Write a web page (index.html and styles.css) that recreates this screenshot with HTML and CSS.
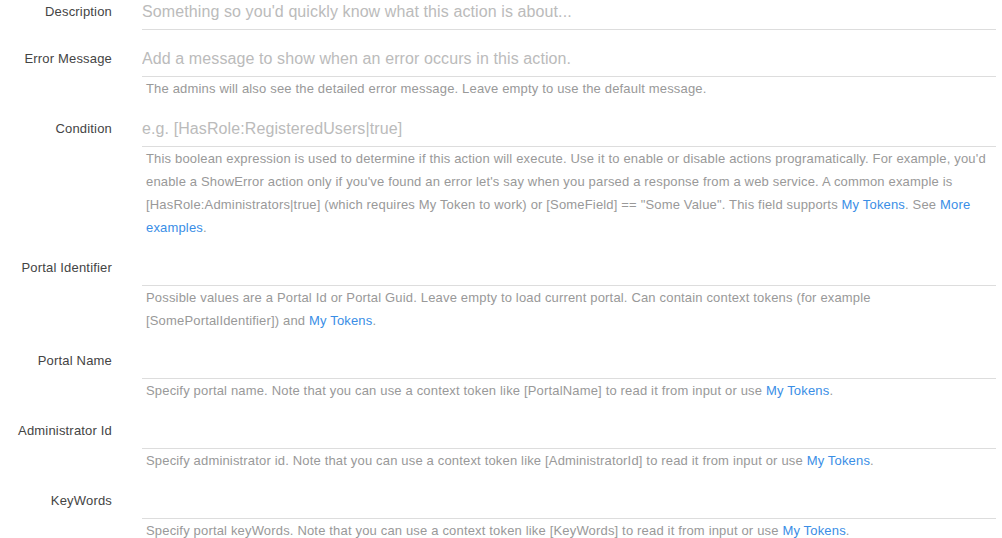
FILE: index.html
```html
<!DOCTYPE html>
<html>
<head>
<meta charset="utf-8">
<link rel="stylesheet" href="styles.css">
</head>
<body>
<div class="form">
  <div class="row">
    <label class="lbl">Description</label>
    <div class="field">
      <div class="input ph">Something so you'd quickly know what this action is about...</div>
    </div>
  </div>
  <div class="row">
    <label class="lbl">Error Message</label>
    <div class="field">
      <div class="input ph">Add a message to show when an error occurs in this action.</div>
      <div class="help">The admins will also see the detailed error message. Leave empty to use the default message.</div>
    </div>
  </div>
  <div class="row">
    <label class="lbl">Condition</label>
    <div class="field">
      <div class="input ph">e.g. [HasRole:RegisteredUsers|true]</div>
      <div class="help">This boolean expression is used to determine if this action will execute. Use it to enable or disable actions programatically. For example, you'd enable a ShowError action only if you've found an error let's say when you parsed a response from a web service. A common example is [HasRole:Administrators|true] (which requires My Token to work) or [SomeField] == "Some Value". This field supports <a href="#">My Tokens</a>. See <a href="#">More examples</a>.</div>
    </div>
  </div>
  <div class="row">
    <label class="lbl">Portal Identifier</label>
    <div class="field">
      <div class="input"></div>
      <div class="help">Possible values are a Portal Id or Portal Guid. Leave empty to load current portal. Can contain context tokens (for example [SomePortalIdentifier]) and <a href="#">My Tokens</a>.</div>
    </div>
  </div>
  <div class="row">
    <label class="lbl">Portal Name</label>
    <div class="field">
      <div class="input"></div>
      <div class="help">Specify portal name. Note that you can use a context token like [PortalName] to read it from input or use <a href="#">My Tokens</a>.</div>
    </div>
  </div>
  <div class="row">
    <label class="lbl">Administrator Id</label>
    <div class="field">
      <div class="input"></div>
      <div class="help">Specify administrator id. Note that you can use a context token like [AdministratorId] to read it from input or use <a href="#">My Tokens</a>.</div>
    </div>
  </div>
  <div class="row">
    <label class="lbl">KeyWords</label>
    <div class="field">
      <div class="input"></div>
      <div class="help">Specify portal keyWords. Note that you can use a context token like [KeyWords] to read it from input or use <a href="#">My Tokens</a>.</div>
    </div>
  </div>
</div>
</body>
</html>
```
FILE: styles.css
```css
html, body {
  margin: 0;
  padding: 0;
  background: #fff;
  font-family: "Liberation Sans", Arial, sans-serif;
}
.form {
  display: flex;
  flex-direction: column;
  gap: 11px;
  padding: 0 6px 0 0;
  margin-top: -6px;
}
.row {
  display: grid;
  grid-template-columns: 112px 1fr;
  column-gap: 30px;
}
.lbl {
  text-align: right;
  font-size: 13px;
  letter-spacing: 0.18px;
  color: #444;
  line-height: 36px;
}
.input {
  height: 35px;
  line-height: 35px;
  font-size: 16px;
  letter-spacing: 0.1px;
  border-bottom: 1px solid #ddd;
  white-space: nowrap;
  overflow: hidden;
}
.ph {
  color: #bbb;
}
.help {
  padding: 0 4px 0 4px;
  font-size: 13px;
  line-height: 23px;
  letter-spacing: 0.17px;
  color: #999;
}
.help a {
  color: #3a8ee6;
  text-decoration: none;
}
```
